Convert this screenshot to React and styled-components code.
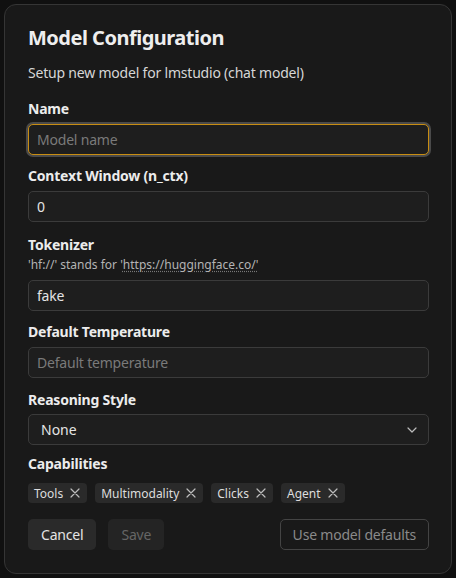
import React from 'react'
import styled, { createGlobalStyle } from 'styled-components'

const GlobalStyle = createGlobalStyle`
    html, body {
        margin: 0;
        padding: 0;
        background: #101010;
        font-family: "Noto Sans", "Open Sans", sans-serif;
        color: #e6e6e6;
    }
    * { box-sizing: border-box; }
`

const Panel = styled.div`
    margin: 4px;
    width: 448px;
    height: 570px;
    background: #191919;
    border: 1px solid #353535;
    border-radius: 12px;
    padding: 19px 22px 23px 23px;
    display: flex;
    flex-direction: column;
`

const Title = styled.h1`
    margin: 0;
    font-size: 20px;
    line-height: 28px;
    font-weight: 700;
    letter-spacing: -0.5px;
    color: #eeeeee;
`

const Subtitle = styled.p`
    margin: 11px 0 16px;
    font-size: 14px;
    line-height: 20px;
    letter-spacing: -0.2px;
    color: #d6d6d6;
`

const Form = styled.div`
    display: flex;
    flex-direction: column;
    gap: 11px;
`

const Field = styled.div`
    display: flex;
    flex-direction: column;
`

const Label = styled.label`
    font-size: 14px;
    line-height: 20px;
    font-weight: 700;
    letter-spacing: -0.2px;
    color: #ececec;
    margin-top: ${p => p.$shift || 0}px;
    margin-bottom: ${p => 5 - (p.$shift || 0)}px;
`

const Hint = styled.div`
    font-size: 12px;
    line-height: 16px;
    color: #b4b4b4;
    margin: -1px 0 7px;
    a {
        color: inherit;
        text-decoration: underline dotted #777;
        text-underline-offset: 2px;
    }
`

const Input = styled.input`
    width: 100%;
    height: 31px;
    padding: 0 8px;
    background: #1e1e1e;
    border: 1px solid ${p => (p.$focused ? '#c88d12' : '#3b3b3b')};
    box-shadow: ${p => (p.$focused ? '0 0 0 2px #4a4a4a' : 'none')};
    border-radius: 5px;
    color: #e4e4e4;
    font-family: inherit;
    font-size: 14px;
    letter-spacing: -0.2px;
    outline: none;
    &::placeholder { color: #7a7a7a; }
`

const Select = styled.div`
    height: 31px;
    padding: 0 12px;
    background: #1e1e1e;
    border: 1px solid #3b3b3b;
    border-radius: 5px;
    display: flex;
    align-items: center;
    justify-content: space-between;
    font-size: 14px;
    color: #e4e4e4;
    svg { color: #bbbbbb; margin-right: -1px; }
`

const Chips = styled.div`
    display: flex;
    gap: 8px;
    margin-top: 2px;
`

const Chip = styled.span`
    display: inline-flex;
    align-items: center;
    gap: 7px;
    height: 20px;
    padding: 0 7px 0 6px;
    background: #2a2a2a;
    border-radius: 4px;
    font-size: 12px;
    color: #dddddd;
    svg { color: #bdbdbd; }
`

const Actions = styled.div`
    display: flex;
    align-items: center;
    gap: 12px;
    margin-top: 16px;
`

const Button = styled.button`
    height: 31px;
    padding: 0 12px;
    border-radius: 5px;
    font-family: inherit;
    font-size: 14px;
    letter-spacing: -0.2px;
    cursor: pointer;
    background: ${p => (p.$outline ? 'transparent' : p.$disabled ? '#242424' : '#2a2a2a')};
    color: ${p => (p.$outline ? '#8a8a8a' : p.$disabled ? '#666666' : '#e4e4e4')};
    border: 1px solid ${p => (p.$outline ? '#444444' : 'transparent')};
    ${p => p.$right && 'margin-left: auto;'}
`

const Cross = () => (
    <svg width="10" height="10" viewBox="0 0 10 10" fill="none" stroke="currentColor" strokeWidth="1.2" strokeLinecap="round">
        <path d="M1 1l8 8M9 1l-8 8" />
    </svg>
)

const Chevron = () => (
    <svg width="10" height="6" viewBox="0 0 10 6" fill="none" stroke="currentColor" strokeWidth="1.2" strokeLinecap="round" strokeLinejoin="round">
        <path d="M1 1l4 4 4-4" />
    </svg>
)

const capabilities = ['Tools', 'Multimodality', 'Clicks', 'Agent']

function App() {
    return (
        <>
            <GlobalStyle />
            <Panel>
                <Title>Model Configuration</Title>
                <Subtitle>Setup new model for lmstudio (chat model)</Subtitle>
                <Form>
                    <Field>
                        <Label>Name</Label>
                        <Input $focused placeholder="Model name" />
                    </Field>
                    <Field>
                        <Label>Context Window (n_ctx)</Label>
                        <Input defaultValue="0" />
                    </Field>
                    <Field>
                        <Label $shift={2}>Tokenizer</Label>
                        <Hint>'hf://' stands for '<a>https://huggingface.co/'</a></Hint>
                        <Input defaultValue="fake" />
                    </Field>
                    <Field>
                        <Label>Default Temperature</Label>
                        <Input placeholder="Default temperature" />
                    </Field>
                    <Field>
                        <Label $shift={1}>Reasoning Style</Label>
                        <Select>
                            <span>None</span>
                            <Chevron />
                        </Select>
                    </Field>
                    <Field>
                        <Label $shift={-2}>Capabilities</Label>
                        <Chips>
                            {capabilities.map(c => (
                                <Chip key={c}>{c}<Cross /></Chip>
                            ))}
                        </Chips>
                    </Field>
                </Form>
                <Actions>
                    <Button>Cancel</Button>
                    <Button $disabled>Save</Button>
                    <Button $outline $right>Use model defaults</Button>
                </Actions>
            </Panel>
        </>
    )
}

export default App
